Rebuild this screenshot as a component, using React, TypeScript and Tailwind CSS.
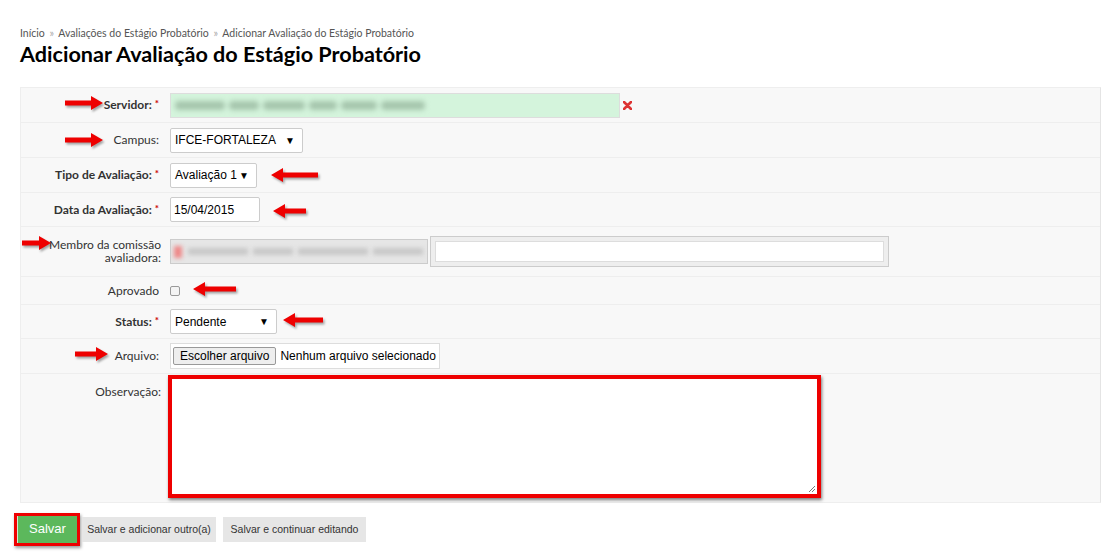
import React from "react";

function Arrow({ x, y, w, dir }: { x: number; y: number; w: number; dir: "left" | "right" }) {
  const h = 14;
  const head = 12;
  const shaftH = 5;
  const pts =
    dir === "right"
      ? `0,${(h - shaftH) / 2} ${w - head},${(h - shaftH) / 2} ${w - head},0 ${w},${h / 2} ${w - head},${h} ${w - head},${(h + shaftH) / 2} 0,${(h + shaftH) / 2}`
      : `${w},${(h - shaftH) / 2} ${head},${(h - shaftH) / 2} ${head},0 0,${h / 2} ${head},${h} ${head},${(h + shaftH) / 2} ${w},${(h + shaftH) / 2}`;
  return (
    <svg
      className="absolute"
      style={{ left: x, top: y - h / 2, overflow: "visible" }}
      width={w}
      height={h}
      viewBox={`0 0 ${w} ${h}`}
    >
      <polygon points={pts} fill="rgba(0,0,0,0.35)" transform="translate(1.5,2)" style={{ filter: "blur(1.2px)" }} />
      <polygon points={pts} fill="#ee0000" />
    </svg>
  );
}

function Label({ children, req, bold }: { children: React.ReactNode; req?: boolean; bold?: boolean }) {
  return (
    <div className={`w-[141px] shrink-0 text-right pr-[3px] text-[12px] text-[#333] whitespace-nowrap ${bold ? "font-bold" : ""}`}>
      {children}
      {req && <span className="text-[#c00] text-[10px] align-top ml-[3px]">*</span>}
    </div>
  );
}

function SelectBox({ w, text }: { w: number; text: string }) {
  return (
    <div
      className="h-[25px] bg-white border border-[#ccc] rounded-[2px] flex items-center justify-between pl-[4px] pr-[7px] text-[12px] text-black whitespace-nowrap shrink-0"
      style={{ width: w, fontFamily: "'Liberation Sans', Arial, sans-serif" }}
    >
      <span>{text}</span>
      <span className="text-[10px]">▼</span>
    </div>
  );
}

export default function App() {
  const arial = { fontFamily: "'Liberation Sans', Arial, sans-serif" };
  return (
    <div className="relative w-[1120px] h-[553px] bg-white overflow-hidden" style={{ fontFamily: "Lato, 'Open Sans', sans-serif" }}>
      <div className="pl-[20px] pt-[26px]">
        <div className="text-[10.5px] text-[#555] leading-[14px] whitespace-nowrap">
          Início <span className="text-[#aaa] mx-[2px]">»</span> Avaliações do Estágio Probatório{" "}
          <span className="text-[#aaa] mx-[2px]">»</span> Adicionar Avaliação do Estágio Probatório
        </div>
        <h1 className="text-[21.6px] font-bold text-black leading-[26px] mt-[1px] whitespace-nowrap">Adicionar Avaliação do Estágio Probatório</h1>

        <div className="mt-[20px] w-[1081px] bg-[#f8f8f8] border border-[#eee] border-r-[#e4e4e4]">
          {/* Servidor */}
          <div className="h-[35px] flex items-center border-b border-[#eee]">
            <Label req bold>Servidor:</Label>
            <div className="ml-[8px] w-[450px] h-[25px] bg-[#d4f4dc] border border-[#ddd] flex items-center pl-[4px] overflow-hidden">
              <div className="flex gap-[4px] blur-[2.5px]">
                <div className="w-[50px] h-[9px] bg-[#a6c6ad] rounded" />
                <div className="w-[30px] h-[9px] bg-[#a6c6ad] rounded" />
                <div className="w-[42px] h-[9px] bg-[#a6c6ad] rounded" />
                <div className="w-[28px] h-[9px] bg-[#a6c6ad] rounded" />
                <div className="w-[36px] h-[9px] bg-[#a6c6ad] rounded" />
                <div className="w-[44px] h-[9px] bg-[#a6c6ad] rounded" />
              </div>
            </div>
            <svg className="ml-[3px]" width="9" height="9" viewBox="0 0 9 9">
              <path d="M1 1 L8 8 M8 1 L1 8" stroke="#d33" strokeWidth="2.6" strokeLinecap="round" />
            </svg>
          </div>
          {/* Campus */}
          <div className="h-[35px] flex items-center border-b border-[#eee]">
            <Label>Campus:</Label>
            <div className="ml-[8px]"><SelectBox w={133} text="IFCE-FORTALEZA" /></div>
          </div>
          {/* Tipo */}
          <div className="h-[35px] flex items-center border-b border-[#eee]">
            <Label req bold>Tipo de Avaliação:</Label>
            <div className="ml-[8px]"><SelectBox w={87} text="Avaliação 1" /></div>
          </div>
          {/* Data */}
          <div className="h-[34px] flex items-center border-b border-[#eee]">
            <Label req bold>Data da Avaliação:</Label>
            <div className="ml-[8px] w-[90px] h-[25px] bg-white border border-[#ccc] rounded-[2px] flex items-center pl-[3px] text-[12px] text-black" style={arial}>
              15/04/2015
            </div>
          </div>
          {/* Membro */}
          <div className="h-[50px] flex items-center border-b border-[#eee]">
            <div className="w-[141px] shrink-0 text-right pr-[1px] text-[12px] text-[#333] leading-[13px] mt-[-2px]">
              Membro da comissão
              <br />
              avaliadora:
            </div>
            <div className="ml-[8px] w-[258px] h-[25px] bg-[#e6e6e6] border border-[#ccc] flex items-center pl-[3px] gap-[6px] overflow-hidden">
              <div className="w-[8px] h-[12px] bg-[#e88] blur-[2px]" />
              <div className="flex gap-[5px] blur-[2px]">
                <div className="w-[60px] h-[7px] bg-[#c8c8c8]" />
                <div className="w-[40px] h-[7px] bg-[#c8c8c8]" />
                <div className="w-[70px] h-[7px] bg-[#c8c8c8]" />
                <div className="w-[50px] h-[7px] bg-[#c8c8c8]" />
              </div>
            </div>
            <div className="ml-[2px] w-[459px] h-[31px] bg-[#eee] border border-[#ccc] p-[4px]">
              <div className="w-full h-full bg-white border border-[#ddd]" />
            </div>
          </div>
          {/* Aprovado */}
          <div className="h-[28px] flex items-center border-b border-[#eee]">
            <Label>Aprovado</Label>
            <div className="ml-[8px] w-[10px] h-[10px] rounded-[2px] border border-[#999] bg-[#f4f4f4]" />
          </div>
          {/* Status */}
          <div className="h-[34px] flex items-center border-b border-[#eee]">
            <Label req bold>Status:</Label>
            <div className="ml-[8px]"><SelectBox w={107} text="Pendente" /></div>
          </div>
          {/* Arquivo */}
          <div className="h-[35px] flex items-center border-b border-[#eee]">
            <Label>Arquivo:</Label>
            <div className="ml-[8px] w-[270px] h-[26px] bg-white border border-[#ddd] flex items-center pl-[2px] text-[12px] text-black whitespace-nowrap" style={arial}>
              <div className="h-[18px] px-[6px] bg-[#eeeeee] border border-[#999] rounded-[2px] flex items-center text-[12px]">
                Escolher arquivo
              </div>
              <span className="ml-[4px]">Nenhum arquivo selecionado</span>
            </div>
          </div>
          {/* Observação */}
          <div className="h-[128px] flex items-start">
            <div className="w-[141px] shrink-0 text-right pr-[1px] text-[12px] text-[#333] mt-[9px]">Observação:</div>
            <div className="ml-[6px] mt-[1px] w-[653px] h-[123px] bg-white border-[4px] border-[#ee0000] shadow-[1px_2px_3px_rgba(0,0,0,0.5)] relative">
              <svg className="absolute right-[1px] bottom-[1px]" width="8" height="8" viewBox="0 0 8 8">
                <path d="M7 1 L1 7 M7 4 L4 7" stroke="#777" strokeWidth="1" />
              </svg>
            </div>
          </div>
        </div>
      </div>

      {/* Buttons */}
      <div className="flex items-center ml-[14px] mt-[10px] whitespace-nowrap" style={arial}>
        <div className="w-[66px] h-[33px] border-[3px] border-[#e00] shadow-[1px_2px_3px_rgba(0,0,0,0.4)] bg-[#5cb85c] flex items-center text-white text-[13px]">
          <div className="h-full w-[1px] bg-[#cfe8cf]" />
          <span className="flex-1 text-center pb-[2px]">Salvar</span>
        </div>
        <div className="ml-[2px] h-[25px] w-[134px] bg-[#e6e6e6] flex items-center justify-center text-[10.5px] text-[#333]">Salvar e adicionar outro(a)</div>
        <div className="ml-[7px] h-[25px] w-[143px] bg-[#e6e6e6] flex items-center justify-center text-[10.5px] text-[#333]">Salvar e continuar editando</div>
      </div>

      {/* Arrows */}
      <Arrow x={65} y={103} w={38} dir="right" />
      <Arrow x={65} y={140} w={38} dir="right" />
      <Arrow x={271} y={175} w={47} dir="left" />
      <Arrow x={273} y={211} w={33} dir="left" />
      <Arrow x={22} y={243} w={29} dir="right" />
      <Arrow x={193} y={289} w={43} dir="left" />
      <Arrow x={283} y={320} w={40} dir="left" />
      <Arrow x={75} y={354} w={33} dir="right" />
    </div>
  );
}
